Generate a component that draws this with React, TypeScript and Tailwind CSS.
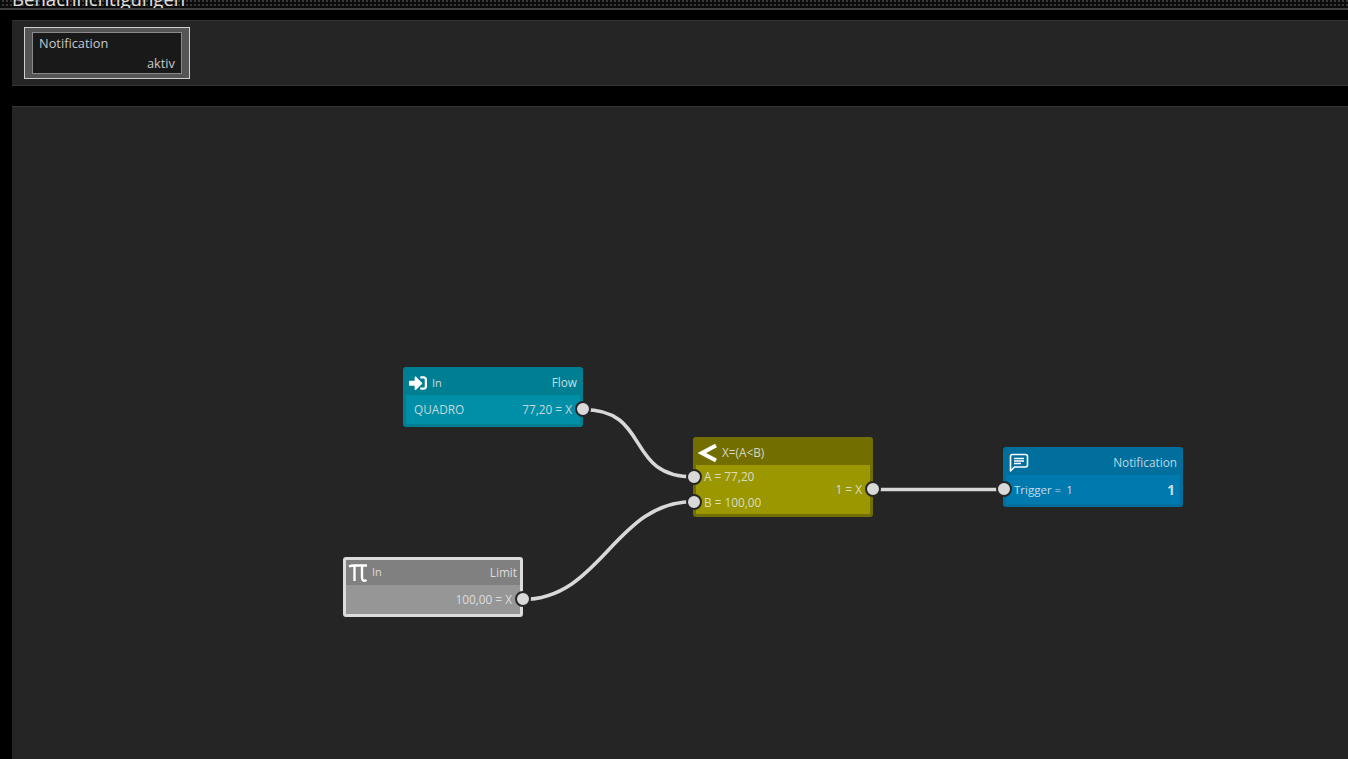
import { FaSignInAlt } from "react-icons/fa";

const PORT = "absolute w-[16px] h-[16px] rounded-full bg-[#d9d9d9] border-2 border-[#262626]";

function Port({ pos }: { pos: string }) {
  return <div className={`${PORT} ${pos}`} />;
}

function PiIcon() {
  return (
    <svg width="20" height="20" viewBox="0 0 20 20" fill="none" stroke="white" strokeWidth="2.4">
      <path d="M1 3.5C3 2.5 4 2.5 6 2.5H19" />
      <path d="M6.5 3V18" />
      <path d="M14 3V14.5C14 18 16 18.5 18.5 17" />
    </svg>
  );
}

function LessIcon() {
  return (
    <svg width="20" height="20" viewBox="0 0 20 20" fill="none" stroke="white" strokeWidth="4" strokeLinejoin="miter">
      <path d="M18 2.5L4 10L18 17.5" />
    </svg>
  );
}

function ChatIcon() {
  return (
    <svg width="20" height="20" viewBox="0 0 20 20" fill="none" stroke="white" strokeWidth="1.6">
      <path d="M1.5 18V3.5Q1.5 1.5 3.5 1.5H16.5Q18.5 1.5 18.5 3.5V12Q18.5 14 16.5 14H5.5Z" strokeLinejoin="round" />
      <path d="M5 5.5H15M5 8H15M5 10.5H12" strokeWidth="1.3" />
    </svg>
  );
}

export default function App() {
  return (
    <div
      className="h-[759px] w-[1348px] overflow-hidden bg-black text-[11.8px] text-[#d4d4d4]"
      style={{ fontFamily: '"Open Sans", "Noto Sans", sans-serif' }}
    >
      {/* Titelleiste */}
      <div className="h-[10px] overflow-hidden border-b-2 border-[#404040] bg-[#101010] bg-[conic-gradient(#383838_25%,#0c0c0c_0_100%)] bg-[length:4px_4px]">
        <div className="mt-[-13px] ml-[12px] text-[18.6px] leading-[24px] text-[#e0e0e0]">
          Benachrichtigungen
        </div>
      </div>

      {/* Kachelleiste */}
      <div className="mt-[10px] ml-[12px] h-[66px] border-y border-[#333] bg-[#252525] pt-[6px] pl-[12px]">
        <div className="h-[52px] w-[166px] border border-[#cfcfcf] bg-[#555] px-[7px] pt-[4px]">
          <div className="flex h-[42px] flex-col justify-between border border-[#8a8a8a] bg-[#191919] px-[6px] text-[12.8px] leading-[18px] text-[#c8c8c8]">
            <div className="pt-[1px]">Notification</div>
            <div className="pb-[1px] text-right">aktiv</div>
          </div>
        </div>
      </div>

      {/* Editorfläche */}
      <div className="relative mt-[20px] ml-[12px] h-[653px] border-t border-[#333] bg-[#252525]">
        <svg className="absolute inset-0 h-full w-full" fill="none" stroke="#d8d8d8" strokeWidth="3.6">
          <path d="M571 302.5C640 302.5 612 370 682 370" />
          <path d="M510 492.5C590 492.5 602 394.5 682 394.5" />
          <path d="M860 382.5H992" />
        </svg>

        {/* In: Flow */}
        <div className="absolute top-[260px] left-[391px] flex h-[60px] w-[180px] flex-col rounded-[3px] bg-[#007f92] px-[3px] pb-[3px]">
          <div className="flex h-[28px] items-center justify-between pt-[4px] pr-[3px] pl-[3px] text-[#c8dde2]">
            <div className="flex items-center gap-[5px]">
              <FaSignInAlt className="h-[18px] w-[18px] text-white" />
              <span className="text-[11px]">In</span>
            </div>
            <span>Flow</span>
          </div>
          <div className="flex flex-1 items-center justify-between bg-[#008fa7] pr-[8px] pl-[8px] text-[#c4d8dd]">
            <span>QUADRO</span>
            <span>77,20 = X</span>
          </div>
          <Port pos="right-[-8px] top-[34px]" />
        </div>

        {/* In: Limit */}
        <div className="absolute top-[450px] left-[331px] flex h-[60px] w-[180px] flex-col rounded-[3px] border-[3px] border-[#dcdcdc] bg-[#808080]">
          <div className="flex h-[25px] items-center justify-between pr-[3px] pl-[2px] text-[#dcdcdc]">
            <div className="flex items-center gap-[4px]">
              <PiIcon />
              <span className="text-[11px]">In</span>
            </div>
            <span>Limit</span>
          </div>
          <div className="flex flex-1 items-center justify-end bg-[#969696] pr-[8px] text-[#dcdcdc]">
            <span>100,00 = X</span>
          </div>
          <Port pos="right-[-11px] top-[31px]" />
        </div>

        {/* X=(A<B) */}
        <div className="absolute top-[330px] left-[681px] flex h-[80px] w-[180px] flex-col rounded-[3px] bg-[#726e00] px-[3px] pb-[3px]">
          <div className="flex h-[28px] items-center gap-[4px] pt-[3px] pl-[2px] text-[#d8d8c0]">
            <LessIcon />
            <span>X=(A&lt;B)</span>
          </div>
          <div className="relative flex-1 bg-[#9a9700] text-[#dcdcc4]">
            <div className="absolute top-[3px] left-[8px]">A = 77,20</div>
            <div className="absolute top-[29px] left-[8px]">B = 100,00</div>
            <div className="absolute top-[16px] right-[8px]">1 = X</div>
          </div>
          <Port pos="left-[-7px] top-[32px]" />
          <Port pos="left-[-7px] top-[57px]" />
          <Port pos="right-[-8px] top-[44px]" />
        </div>

        {/* Notification */}
        <div className="absolute top-[340px] left-[991px] flex h-[60px] w-[180px] flex-col rounded-[3px] bg-[#006f9e] px-[3px] pb-[3px]">
          <div className="flex h-[28px] items-center justify-between pt-[3px] pr-[3px] pl-[3px] text-[#bfd6e2]">
            <ChatIcon />
            <span>Notification</span>
          </div>
          <div className="flex flex-1 items-center justify-between bg-[#0079ae] pr-[5px] pl-[8px] text-[#c8dce8]">
            <div className="flex gap-[5px] text-[11.5px]">
              <span>Trigger =</span>
              <span>1</span>
            </div>
            <span className="text-[14px] font-bold text-[#c8dce8]">1</span>
          </div>
          <Port pos="left-[-7px] top-[34px]" />
        </div>
      </div>
    </div>
  );
}
